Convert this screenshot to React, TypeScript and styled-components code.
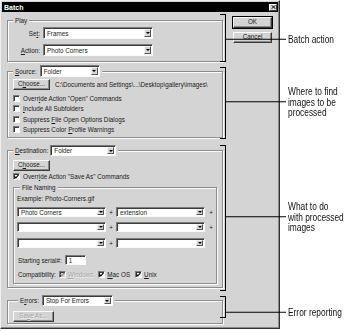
import React from "react";
import styled, { createGlobalStyle, css } from "styled-components";

const GRAY = "#d4d4d4";

const GlobalStyle = createGlobalStyle`
  html, body { margin: 0; padding: 0; background: #ffffff; }
  body { font-family: "Liberation Sans", Arial, sans-serif; color: #000; }
  * { box-sizing: border-box; }
`;

const Page = styled.div`
  width: 350px;
  height: 331px;
  overflow: hidden;
`;

const Dialog = styled.div`
  width: 280px;
  height: 329px;
  background: ${GRAY};
  border: 1px solid;
  border-color: #efefef #333 #333 #efefef;
  box-shadow: inset -1px -1px 0 #8a8a8a;
  padding: 1px;
  display: flex;
  flex-direction: column;
  font-size: 6.3px;
  line-height: 7px;
  color: #1a1a1a;
`;

const TitleBar = styled.div`
  height: 10px;
  background: #000;
  color: #fff;
  display: flex;
  align-items: center;
  justify-content: space-between;
  padding: 0 1px 0 2px;
  font-weight: bold;
  font-size: 7px;
`;

const CloseBox = styled.span`
  width: 8px;
  height: 7px;
  background: ${GRAY};
  border: 1px solid;
  border-color: #fff #404040 #404040 #fff;
  display: flex;
  align-items: center;
  justify-content: center;
`;

const Body = styled.div`
  flex: 1;
  display: flex;
  gap: 10px;
  padding: 5px 5px 0 5px;
`;

const LeftCol = styled.div`
  width: 216px;
  display: flex;
  flex-direction: column;
`;

const RightCol = styled.div`
  display: flex;
  flex-direction: column;
  gap: 4px;
`;

const Section = styled.div<{ $mt: number }>`
  position: relative;
  margin-top: ${(p) => p.$mt}px;
`;

const Group = styled.fieldset<{ $pad: string }>`
  margin: 0;
  min-width: 0;
  padding: ${(p) => p.$pad};
  border: 1px solid #8c8c8c;
  box-shadow: 1px 1px 0 #fbfbfb, inset 1px 1px 0 #fbfbfb;
`;

const Legend = styled.legend<{ $ml?: number }>`
  padding: 0 2px;
  margin-left: ${(p) => p.$ml ?? 0}px;
  background: ${GRAY};
  line-height: 7px;
`;

const LegendRow = styled.div<{ $gap: number }>`
  display: flex;
  align-items: center;
  gap: ${(p) => p.$gap}px;
`;

const FormGrid = styled.div`
  display: grid;
  grid-template-columns: 27px 110px;
  column-gap: 3px;
  row-gap: 5px;
  align-items: center;
`;

const Label = styled.span<{ $right?: boolean; $disabled?: boolean }>`
  white-space: nowrap;
  text-align: ${(p) => (p.$right ? "right" : "left")};
  ${(p) =>
    p.$disabled &&
    css`
      color: #a3a3a3;
      text-shadow: 0.6px 0.6px 0 #f4f4f4;
    `}
`;

const U = styled.span`
  text-decoration: underline;
  text-decoration-thickness: 0.5px;
  text-underline-offset: 1px;
`;

const SelectBox = styled.div<{ $w: number; $h?: number }>`
  width: ${(p) => p.$w}px;
  height: ${(p) => p.$h ?? 12}px;
  flex: none;
  background: #fff;
  border: 1px solid;
  border-color: #7c7c7c #fafafa #fafafa #7c7c7c;
  box-shadow: inset 1px 1px 0 #3c3c3c;
  display: flex;
  align-items: stretch;
  padding: 1px 1px 1px 2px;
`;

const SelectValue = styled.span`
  flex: 1;
  display: flex;
  align-items: center;
  padding-left: 1px;
  white-space: nowrap;
  overflow: hidden;
`;

const Arrow = styled.span`
  width: 7px;
  background: ${GRAY};
  border: 1px solid;
  border-color: #f4f4f4 #555 #555 #f4f4f4;
  display: flex;
  align-items: center;
  justify-content: center;
  &::after {
    content: "";
    border-top: 2px solid #000;
    border-left: 2px solid transparent;
    border-right: 2px solid transparent;
  }
`;

const TextBox = styled.div<{ $w: number }>`
  width: ${(p) => p.$w}px;
  height: 10px;
  background: #fff;
  border: 1px solid;
  border-color: #7c7c7c #fafafa #fafafa #7c7c7c;
  box-shadow: inset 1px 1px 0 #3c3c3c;
  padding-left: 3px;
  display: flex;
  align-items: center;
`;

const Button = styled.button<{ $w: number; $default?: boolean; $disabled?: boolean }>`
  width: ${(p) => p.$w}px;
  height: 11px;
  flex: none;
  padding: 0;
  font: inherit;
  font-size: 6.3px;
  line-height: 1;
  background: ${GRAY};
  color: #1a1a1a;
  border: 1px solid;
  border-color: #fafafa #3a3a3a #3a3a3a #fafafa;
  box-shadow: inset -1px -1px 0 #8a8a8a;
  ${(p) =>
    p.$default &&
    css`
      box-shadow: inset -1px -1px 0 #8a8a8a, 0 0 0 1px #000;
    `}
  ${(p) =>
    p.$disabled &&
    css`
      color: #a3a3a3;
      text-shadow: 0.6px 0.6px 0 #f4f4f4;
    `}
`;

const ChooseRow = styled.div`
  display: flex;
  align-items: center;
  gap: 5px;
  white-space: nowrap;
`;

const CheckList = styled.div`
  display: flex;
  flex-direction: column;
  margin-top: 3px;
`;

const CheckRow = styled.div<{ $h?: number }>`
  height: ${(p) => p.$h ?? 10.5}px;
  display: flex;
  align-items: center;
  gap: 3px;
  white-space: nowrap;
`;

const Box = styled.span<{ $disabled?: boolean }>`
  width: 7px;
  height: 7px;
  flex: none;
  background: ${(p) => (p.$disabled ? GRAY : "#fff")};
  border: 1px solid;
  border-color: #7c7c7c #fafafa #fafafa #7c7c7c;
  box-shadow: inset 1px 1px 0 #3c3c3c;
  display: flex;
  align-items: center;
  justify-content: center;
`;

const DestBody = styled.div`
  display: flex;
  flex-direction: column;
`;

const NamingBody = styled.div`
  display: flex;
  flex-direction: column;
`;

const ExampleRow = styled.div`
  height: 8px;
  display: flex;
  align-items: center;
  white-space: nowrap;
`;

const NameRow = styled.div<{ $mt: number }>`
  display: grid;
  grid-template-columns: 89px 10px 89px 12px;
  align-items: center;
  margin-top: ${(p) => p.$mt}px;
`;

const Plus = styled.span`
  text-align: center;
  color: #1a1a1a;
`;

const InlineRow = styled.div<{ $mt: number; $h: number }>`
  display: flex;
  align-items: center;
  gap: 3px;
  height: ${(p) => p.$h}px;
  margin-top: ${(p) => p.$mt}px;
  padding-left: 1px;
  white-space: nowrap;
`;

const CompatItem = styled.span<{ $ml: number }>`
  display: flex;
  align-items: center;
  gap: 2px;
  margin-left: ${(p) => p.$ml}px;
`;

const Bracket = styled.div<{ $top: number; $height: number }>`
  position: absolute;
  left: calc(100% - 3px);
  top: ${(p) => p.$top}px;
  width: 6px;
  height: ${(p) => p.$height}px;
  border: 1px solid #000;
  border-left: none;
`;

const Note = styled.div<{ $at: number }>`
  position: absolute;
  left: calc(100% + 3px);
  top: ${(p) => p.$at}px;
  transform: translateY(-50%);
  display: flex;
  align-items: center;
  gap: 2px;
`;

const LeaderLine = styled.span`
  width: 60px;
  height: 1px;
  background: #000;
  flex: none;
`;

const NoteText = styled.span`
  font-family: "Liberation Sans", Arial, sans-serif;
  font-size: 11px;
  line-height: 10.5px;
  white-space: nowrap;
  color: #111;
  width: 60px;
  transform: scaleX(0.76);
  transform-origin: left center;
`;

const CheckMark = () => (
  <svg width="5" height="5" viewBox="0 0 5 5">
    <polyline points="0.5,2.3 1.8,3.8 4.5,0.8" fill="none" stroke="#000" strokeWidth="1.1" />
  </svg>
);

const GrayCheckMark = () => (
  <svg width="5" height="5" viewBox="0 0 5 5">
    <polyline points="0.5,2.3 1.8,3.8 4.5,0.8" fill="none" stroke="#8a8a8a" strokeWidth="1.1" />
  </svg>
);

const Select = ({ w, h, value }: { w: number; h?: number; value?: string }) => (
  <SelectBox $w={w} $h={h}>
    <SelectValue>{value ?? ""}</SelectValue>
    <Arrow />
  </SelectBox>
);

const Callout = ({
  top,
  height,
  at,
  children,
}: {
  top: number;
  height: number;
  at: number;
  children: React.ReactNode;
}) => (
  <>
    <Bracket $top={top} $height={height} />
    <Note $at={at}>
      <LeaderLine />
      <NoteText>{children}</NoteText>
    </Note>
  </>
);

export default function App() {
  return (
    <Page>
      <GlobalStyle />
      <Dialog>
        <TitleBar>
          <span>Batch</span>
          <CloseBox>
            <svg width="5" height="4" viewBox="0 0 5 4">
              <path d="M0.5 0.3 L4.5 3.7 M4.5 0.3 L0.5 3.7" stroke="#000" strokeWidth="0.9" />
            </svg>
          </CloseBox>
        </TitleBar>
        <Body>
          <LeftCol>
            <Section $mt={0}>
              <Group $pad="3px 5px 5px 5px">
                <Legend>Play</Legend>
                <FormGrid>
                  <Label $right>
                    Se<U>t</U>:
                  </Label>
                  <Select w={110} value="Frames" />
                  <Label $right>
                    <U>A</U>ction:
                  </Label>
                  <Select w={110} value="Photo Corners" />
                </FormGrid>
              </Group>
              <Callout top={-3} height={48} at={22}>
                Batch action
              </Callout>
            </Section>

            <Section $mt={3}>
              <Group $pad="2px 5px 2px 5px">
                <Legend>
                  <LegendRow $gap={3}>
                    <Label>
                      <U>S</U>ource:
                    </Label>
                    <Select w={60} value="Folder" />
                  </LegendRow>
                </Legend>
                <ChooseRow>
                  <Button $w={37}>
                    C<U>h</U>oose...
                  </Button>
                  <span>C:\Documents and Settings\...\Desktop\gallery\images\</span>
                </ChooseRow>
                <CheckList>
                  <CheckRow>
                    <Box />
                    <span>
                      Overr<U>i</U>de Action "Open" Commands
                    </span>
                  </CheckRow>
                  <CheckRow>
                    <Box />
                    <span>
                      <U>I</U>nclude All Subfolders
                    </span>
                  </CheckRow>
                  <CheckRow>
                    <Box />
                    <span>
                      Suppress <U>F</U>ile Open Options Dialogs
                    </span>
                  </CheckRow>
                  <CheckRow>
                    <Box />
                    <span>
                      Suppress Color <U>P</U>rofile Warnings
                    </span>
                  </CheckRow>
                </CheckList>
              </Group>
              <Callout top={2} height={72} at={37}>
                Where to find
                <br />
                images to be
                <br />
                processed
              </Callout>
            </Section>

            <Section $mt={7}>
              <Group $pad="4px 5px 3px 5px">
                <Legend>
                  <LegendRow $gap={2}>
                    <Label>
                      <U>D</U>estination:
                    </Label>
                    <Select w={66} h={11} value="Folder" />
                  </LegendRow>
                </Legend>
                <DestBody>
                  <Button $w={37}>
                    C<U>h</U>oose...
                  </Button>
                  <CheckRow $h={10}>
                    <Box>
                      <CheckMark />
                    </Box>
                    <span>
                      Overr<U>i</U>de Action "Save As" Commands
                    </span>
                  </CheckRow>
                  <Section $mt={3}>
                    <Group $pad="3px 3px 5px 3px">
                      <Legend $ml={3}>File Naming</Legend>
                      <NamingBody>
                        <ExampleRow>Example: Photo-Corners.gif</ExampleRow>
                        <NameRow $mt={5}>
                          <Select w={89} h={10} value="Photo Corners" />
                          <Plus>+</Plus>
                          <Select w={89} h={10} value="extension" />
                          <Plus>+</Plus>
                        </NameRow>
                        <NameRow $mt={5}>
                          <Select w={89} h={10} />
                          <Plus>+</Plus>
                          <Select w={89} h={10} />
                          <Plus>+</Plus>
                        </NameRow>
                        <NameRow $mt={6}>
                          <Select w={89} h={10} />
                          <Plus>+</Plus>
                          <Select w={89} h={10} />
                          <span />
                        </NameRow>
                        <InlineRow $mt={7} $h={10}>
                          <span>Starting serial#:</span>
                          <TextBox $w={21}>1</TextBox>
                        </InlineRow>
                        <InlineRow $mt={5} $h={8}>
                          <span>Compatibility:</span>
                          <CompatItem $ml={0}>
                            <Box $disabled>
                              <GrayCheckMark />
                            </Box>
                            <Label $disabled>
                              <U>W</U>indows
                            </Label>
                          </CompatItem>
                          <CompatItem $ml={2}>
                            <Box>
                              <CheckMark />
                            </Box>
                            <span>
                              <U>M</U>ac OS
                            </span>
                          </CompatItem>
                          <CompatItem $ml={2}>
                            <Box>
                              <CheckMark />
                            </Box>
                            <span>
                              <U>U</U>nix
                            </span>
                          </CompatItem>
                        </InlineRow>
                      </NamingBody>
                    </Group>
                  </Section>
                </DestBody>
              </Group>
              <Callout top={0} height={146} at={72}>
                What to do
                <br />
                with processed
                <br />
                images
              </Callout>
            </Section>

            <Section $mt={7}>
              <Group $pad="5px 5px 1px 5px">
                <Legend $ml={5}>
                  <LegendRow $gap={3}>
                    <Label>
                      E<U>r</U>rors:
                    </Label>
                    <Select w={71} h={11} value="Stop For Errors" />
                  </LegendRow>
                </Legend>
                <Button $w={41} $disabled>
                  Sa<U>v</U>e As...
                </Button>
              </Group>
              <Callout top={1} height={22} at={17}>
                Error reporting
              </Callout>
            </Section>
          </LeftCol>
          <RightCol>
            <Button $w={39} $default>
              OK
            </Button>
            <Button $w={39}>Cancel</Button>
          </RightCol>
        </Body>
      </Dialog>
    </Page>
  );
}
